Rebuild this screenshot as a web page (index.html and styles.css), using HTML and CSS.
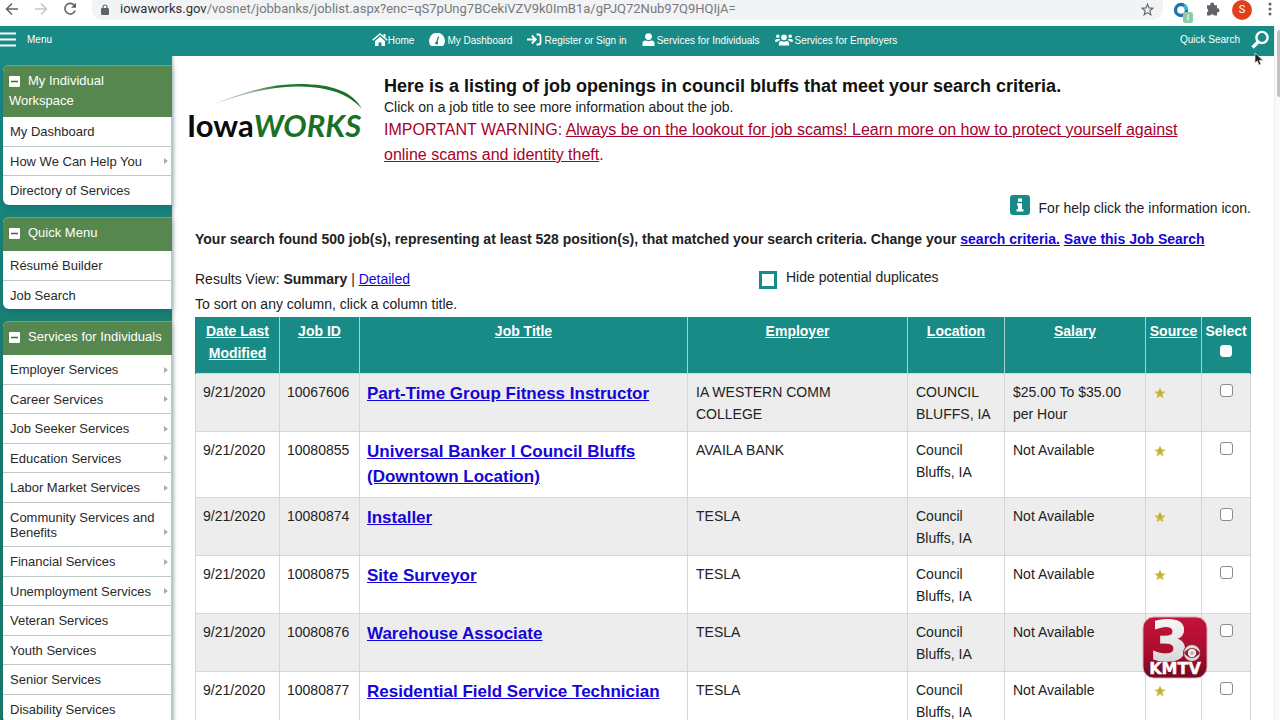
FILE: index.html
```html
<!DOCTYPE html>
<html lang="en">
<head>
<meta charset="utf-8">
<title>IowaWORKS - Job List</title>
<link rel="stylesheet" href="styles.css">
</head>
<body>
<svg class="defs" aria-hidden="true">
  <symbol id="star" viewBox="0 0 12 12"><path d="M6 .6 7.6 4.3l4 .4-3 2.6.9 4L6 9.200l-3.500 2.100.9-4-3-2.600 4-.4z" fill="#cdbd35"/><path d="M6 3v4.500" stroke="#8fa04a" stroke-width="1"/></symbol>
</svg>

<div class="chrome">
  <button class="chrome-btn" aria-label="Back"><svg width="14" height="14" viewBox="0 0 14 14" fill="none" stroke="#5f6368" stroke-width="1.500"><path d="M13 7H2M7 1.500 1.500 7 7 12.500"/></svg></button>
  <button class="chrome-btn" aria-label="Forward"><svg width="14" height="14" viewBox="0 0 14 14" fill="none" stroke="#c4c6c9" stroke-width="1.500"><path d="M1 7h11M7 1.500 12.500 7 7 12.500"/></svg></button>
  <button class="chrome-btn" aria-label="Reload"><svg width="14" height="14" viewBox="0 0 14 14" fill="none" stroke="#5f6368" stroke-width="1.600"><path d="M11.500 3.500A5.300 5.300 0 1 0 12.200 8.500"/><path d="M13 .8v5H8z" fill="#5f6368" stroke="none"/></svg></button>
  <div class="omnibox">
    <svg width="8" height="11" viewBox="0 0 8 11"><rect y="4" width="8" height="7" rx="1" fill="#5f6368"/><path d="M2 4.500V3a2 2 0 0 1 4 0v1.500" fill="none" stroke="#5f6368" stroke-width="1.200"/></svg>
    <span class="url"><b>iowaworks.gov</b>/vosnet/jobbanks/joblist.aspx?enc=qS7pUng7BCekiVZV9k0ImB1a/gPJQ72Nub97Q9HQIjA=</span>
    <svg width="13" height="13" viewBox="0 0 13 13" fill="none" stroke="#5f6368" stroke-width="1.100"><path d="M6.500 1.200 8 4.900l4 .3-3.100 2.600 1 3.900-3.400-2.100-3.400 2.100 1-3.900L1 5.200l4-.3z"/></svg>
  </div>
  <div class="extensions">
    <svg width="21" height="21" viewBox="0 0 21 21"><circle cx="8" cy="8" r="5.500" fill="none" stroke="#2173a6" stroke-width="3.400"/><path d="M11 3.500a5.500 5.500 0 0 1 2.500 4.500" fill="none" stroke="#3fb6d8" stroke-width="3.400"/><rect x="10" y="10" width="10" height="11" rx="2" fill="#8fcbaa"/><path d="M15 12.500v6" stroke="#e8f7ef" stroke-width="1.300"/></svg>
    <svg width="14" height="14" viewBox="0 0 14 14" fill="#5f6368"><path d="M1 3.200h3.300a2 2 0 1 1 3.800 0H11v3.200a2 2 0 1 1 0 3.900v3.200H8a2 2 0 0 0-3.700 0H1v-3.300a2 2 0 0 0 0-3.700z"/></svg>
    <span class="avatar">S</span>
    <svg width="4" height="14" viewBox="0 0 4 14" fill="#5f6368"><circle cx="2" cy="2" r="1.500"/><circle cx="2" cy="7" r="1.500"/><circle cx="2" cy="12" r="1.500"/></svg>
  </div>
</div>

<div class="viewport">
  <div class="page">
    <header class="topbar">
      <button class="menu-btn"><svg width="16" height="15" viewBox="0 0 16 15" stroke="#fff" stroke-width="2"><path d="M0 1.500h16M0 7.500h16M0 13.500h16"/></svg>Menu</button>
      <nav class="topnav">
        <a href="#" class="tight"><svg width="16" height="14" viewBox="0 0 16 14"><path d="M.7 7.200 8 1l7.300 6.200" fill="none" stroke="#fff" stroke-width="1.500"/><path d="M11.500 1h2v4l-2-1.700zM8 3.700l5 4.200V13H9.500V9.500h-3V13H3V7.900z" fill="#fff"/></svg>Home</a>
        <a href="#"><svg width="16" height="14" viewBox="0 0 16 14"><path d="M2 13a8 8 0 1 1 12 0z" fill="#fff"/><path d="m7.500 10 2-6.500" stroke="#198b86" stroke-width="1.300"/><circle cx="7.700" cy="10" r="1.600" fill="#198b86"/></svg>My Dashboard</a>
        <a href="#"><svg width="15" height="14" viewBox="0 0 15 14" fill="none" stroke="#fff" stroke-width="1.800"><path d="M0 6.500h8M4.800 2.500l4 4-4 4M9.500 1.500h2a2 2 0 0 1 2 2v6a2 2 0 0 1-2 2h-2"/></svg>Register or Sign in</a>
        <a href="#"><svg width="13" height="14" viewBox="0 0 13 14" fill="#fff"><circle cx="6.500" cy="3.600" r="3.400"/><path d="M.5 13v-2.200A3.300 3.300 0 0 1 4 7.500a5 5 0 0 0 5 0 3.300 3.300 0 0 1 3.500 3.300V13z"/></svg>Services for Individuals</a>
        <a href="#"><svg width="18" height="14" viewBox="0 0 18 14" fill="#fff"><circle cx="9" cy="4.300" r="2.900"/><circle cx="2.800" cy="3.300" r="1.800"/><circle cx="15.200" cy="3.300" r="1.800"/><path d="M3.800 12.500v-1.400C3.800 9 5.200 8 6.500 8a5 5 0 0 0 5 0c1.300 0 2.700 1 2.700 3.100v1.400zM0 8.500C0 6.700 1 6 2 6h2.500l.8 1.300C4 7.700 3.200 8 2.900 8.800H0zM18 8.500C18 6.700 17 6 16 6h-2.500l-.8 1.300c1.300.4 2.100.7 2.400 1.500H18z"/></svg>Services for Employers</a>
      </nav>
      <button class="quick-search">Quick Search<svg width="18" height="19" viewBox="0 0 18 19" fill="none" stroke="#fff"><circle cx="11" cy="7.500" r="5.600" stroke-width="2.400"/><path d="m7 12-5.500 5.500" stroke-width="3.200"/></svg></button>
    </header>

    <div class="columns">
      <aside class="sidebar">
        <section class="panel">
          <h2><svg class="minus" viewBox="0 0 11 11"><rect width="11" height="11" rx="1" fill="#fff"/><path d="M2 5.500h7" stroke="#3f6b33" stroke-width="1.600"/></svg>My Individual Workspace</h2>
          <ul>
            <li><a href="#">My Dashboard</a></li>
            <li class="more"><a href="#">How We Can Help You</a></li>
            <li><a href="#">Directory of Services</a></li>
          </ul>
        </section>
        <section class="panel">
          <h2><svg class="minus" viewBox="0 0 11 11"><rect width="11" height="11" rx="1" fill="#fff"/><path d="M2 5.500h7" stroke="#3f6b33" stroke-width="1.600"/></svg>Quick Menu</h2>
          <ul>
            <li><a href="#">Résumé Builder</a></li>
            <li><a href="#">Job Search</a></li>
          </ul>
        </section>
        <section class="panel">
          <h2><svg class="minus" viewBox="0 0 11 11"><rect width="11" height="11" rx="1" fill="#fff"/><path d="M2 5.500h7" stroke="#3f6b33" stroke-width="1.600"/></svg>Services for Individuals</h2>
          <ul>
            <li class="more"><a href="#">Employer Services</a></li>
            <li class="more"><a href="#">Career Services</a></li>
            <li class="more"><a href="#">Job Seeker Services</a></li>
            <li class="more"><a href="#">Education Services</a></li>
            <li class="more"><a href="#">Labor Market Services</a></li>
            <li class="more"><a href="#">Community Services and Benefits</a></li>
            <li class="more"><a href="#">Financial Services</a></li>
            <li class="more"><a href="#">Unemployment Services</a></li>
            <li><a href="#">Veteran Services</a></li>
            <li><a href="#">Youth Services</a></li>
            <li><a href="#">Senior Services</a></li>
            <li><a href="#">Disability Services</a></li>
          </ul>
        </section>
      </aside>

      <main class="content">
        <div class="intro">
          <div class="logo">
            <svg viewBox="0 0 177 30" aria-hidden="true"><defs><linearGradient id="swoosh"><stop offset="0" stop-color="#d5dcd6"/><stop offset=".3" stop-color="#8aa890"/><stop offset=".45" stop-color="#1f7a2c"/><stop offset="1" stop-color="#1c6b2a"/></linearGradient></defs><path d="M22 24C56 10 84 2 112 2c34 0 54 8 63 25C162 12 142 5 112 4.500 84 4 56 12 22 24z" fill="url(#swoosh)"/></svg>
            <div class="wordmark">Iowa<em>WORKS</em></div>
          </div>
          <div class="intro-text">
            <h1>Here is a listing of job openings in council bluffs that meet your search criteria.</h1>
            <p>Click on a job title to see more information about the job.</p>
            <p class="warning">IMPORTANT WARNING: <a href="#">Always be on the lookout for job scams! Learn more on how to protect yourself against online scams and identity theft</a>.</p>
          </div>
        </div>

        <p class="help"><svg width="20" height="20" viewBox="0 0 20 20"><rect width="20" height="20" rx="3" fill="#198b86"/><path d="M8 3.500h4v3.200H8zM7 8.300h5v6h1.500v2.200h-7v-2.200H8v-3.800H7z" fill="#fff"/></svg>For help click the information icon.</p>

        <p class="found">Your search found 500 job(s), representing at least 528 position(s), that matched your search criteria. Change your <a href="#">search criteria.</a> <a href="#">Save this Job Search</a></p>

        <div class="view-row">
          <div>Results View: <b>Summary</b> | <a href="#">Detailed</a></div>
          <label class="duplicates"><input type="checkbox">Hide potential duplicates</label>
        </div>
        <p class="sort-note">To sort on any column, click a column title.</p>

        <table class="jobs">
          <colgroup><col class="c-date"><col class="c-id"><col class="c-title"><col class="c-employer"><col class="c-location"><col class="c-salary"><col class="c-source"><col class="c-select"></colgroup>
          <thead>
            <tr>
              <th><a href="#">Date Last Modified</a></th><th><a href="#">Job ID</a></th><th><a href="#">Job Title</a></th><th><a href="#">Employer</a></th><th><a href="#">Location</a></th><th><a href="#">Salary</a></th><th class="snug"><a href="#">Source</a></th><th class="snug"><label>Select<input type="checkbox"></label></th>
            </tr>
          </thead>
          <tbody>
            <tr><td>9/21/2020</td><td>10067606</td><td class="title"><a href="#">Part-Time Group Fitness Instructor</a></td><td>IA WESTERN COMM<br>COLLEGE</td><td>COUNCIL BLUFFS, IA</td><td>$25.00 To $35.00 per Hour</td><td><svg class="star"><use href="#star"/></svg></td><td class="pick"><input type="checkbox" aria-label="Select job 10067606"></td></tr>
            <tr><td>9/21/2020</td><td>10080855</td><td class="title"><a href="#">Universal Banker I Council Bluffs (Downtown Location)</a></td><td>AVAILA BANK</td><td>Council Bluffs, IA</td><td>Not Available</td><td><svg class="star"><use href="#star"/></svg></td><td class="pick"><input type="checkbox" aria-label="Select job 10080855"></td></tr>
            <tr><td>9/21/2020</td><td>10080874</td><td class="title"><a href="#">Installer</a></td><td>TESLA</td><td>Council Bluffs, IA</td><td>Not Available</td><td><svg class="star"><use href="#star"/></svg></td><td class="pick"><input type="checkbox" aria-label="Select job 10080874"></td></tr>
            <tr><td>9/21/2020</td><td>10080875</td><td class="title"><a href="#">Site Surveyor</a></td><td>TESLA</td><td>Council Bluffs, IA</td><td>Not Available</td><td><svg class="star"><use href="#star"/></svg></td><td class="pick"><input type="checkbox" aria-label="Select job 10080875"></td></tr>
            <tr><td>9/21/2020</td><td>10080876</td><td class="title"><a href="#">Warehouse Associate</a></td><td>TESLA</td><td>Council Bluffs, IA</td><td>Not Available</td><td><svg class="star"><use href="#star"/></svg></td><td class="pick"><input type="checkbox" aria-label="Select job 10080876"></td></tr>
            <tr><td>9/21/2020</td><td>10080877</td><td class="title"><a href="#">Residential Field Service Technician</a></td><td>TESLA</td><td>Council Bluffs, IA</td><td>Not Available</td><td><svg class="star"><use href="#star"/></svg></td><td class="pick"><input type="checkbox" aria-label="Select job 10080877"></td></tr>
          </tbody>
        </table>
      </main>
    </div>
  </div>
  <div class="scrollbar"><div class="thumb"></div></div>
</div>

<svg class="cursor" width="10" height="14" viewBox="0 0 10 14" aria-hidden="true"><path d="M1 1v10l2.300-2 1.700 4 2-.9-1.700-3.800H9z" fill="#222" stroke="#ddd" stroke-width=".8"/></svg>

<svg class="station" width="66" height="64" viewBox="0 0 66 64" role="img" aria-label="3 KMTV">
  <defs><linearGradient id="red" x2="0" y2="1"><stop offset="0" stop-color="#c4143a"/><stop offset=".6" stop-color="#a80c2c"/><stop offset="1" stop-color="#6d0a20"/></linearGradient><linearGradient id="silver" x2="0" y2="1"><stop offset="0" stop-color="#fff"/><stop offset="1" stop-color="#cfcfcf"/></linearGradient></defs>
  <rect x="1" y="1" width="64" height="61" rx="11" fill="url(#red)" stroke="#d9a9b3"/>
  <text class="station-num" x="8" y="44" fill="url(#silver)" stroke="url(#silver)" stroke-width="1">3</text>
  <circle cx="50" cy="37" r="8.500" fill="#dcdcdc" stroke="#8e1a30" stroke-width="1"/>
  <path d="M42 37q8-10 16 0-8 10-16 0z" fill="#8e1a30"/><circle cx="50" cy="37" r="4.200" fill="#eee"/><circle cx="50" cy="37" r="2" fill="#c9b0b5"/>
  <text class="station-name" x="33" y="58" text-anchor="middle" fill="#fff" stroke="#fff" stroke-width=".4">KMTV</text>
</svg>
</body>
</html>
```
FILE: styles.css
```css
* { box-sizing: border-box; }
body {
  margin: 0;
  height: 100vh;
  display: flex;
  flex-direction: column;
  overflow: hidden;
  position: relative;
  background: #fff;
  color: #222;
  font: 14px/20px "Liberation Sans", Arial, sans-serif;
}
h1, h2, p, ul { margin: 0; padding: 0; }
button { border: 0; padding: 0; background: none; font: inherit; color: inherit; }
svg { flex: none; }
.defs { position: absolute; width: 0; height: 0; }

/* Browser toolbar */
.chrome { flex: none; height: 26px; display: flex; align-items: flex-start; padding: 0 8px 0 5px; }
.chrome-btn { width: 29px; height: 18px; display: flex; align-items: center; }
.omnibox {
  flex: 1;
  height: 20px;
  display: flex;
  align-items: center;
  gap: 11px;
  padding: 0 9px 2px;
  border-radius: 0 0 10px 10px;
  background: #f1f3f4;
  color: #77797c;
}
.url { flex: 1; font: 13px/18px Roboto, sans-serif; }
.url b { font-weight: 400; color: #303134; }
.extensions { display: flex; align-items: flex-start; gap: 12px; margin-left: 10px; }
.extensions svg { margin-top: 2px; }
.avatar {
  width: 20px; height: 20px;
  border-radius: 50%;
  background: #e0401f;
  color: #fff;
  font: 11px/19px Roboto, sans-serif;
  text-align: center;
}
.extensions svg:last-child { margin-left: 4px; }

.viewport { flex: 1; min-height: 0; display: flex; overflow: hidden; }
.page { flex: 1; min-width: 0; display: flex; flex-direction: column; }
.scrollbar { width: 6px; padding-top: 4px; background: #fafafa; border-left: 1px solid #eee; }
.thumb { height: 67px; margin-left: 2px; border-radius: 4px 0 0 4px; background: #c1c1c1; }

/* Top bar */
.topbar {
  flex: none;
  height: 30px;
  display: grid;
  grid-template-columns: 1fr auto 1fr;
  align-items: center;
  padding-right: 5px;
  background: #198b86;
  color: #fff;
  font-size: 10px;
  line-height: 14px;
}
.topbar svg { display: block; }
.menu-btn { justify-self: start; display: flex; align-items: center; gap: 11px; margin-bottom: 3px; }
.topnav { display: flex; gap: 15px; }
.topnav a { display: flex; align-items: center; gap: 2px; color: #fff; text-decoration: none; }
.topnav a.tight { gap: 0; }
.topnav svg { margin-bottom: 3px; }
.quick-search { justify-self: end; display: flex; align-items: center; gap: 11px; margin-bottom: 3px; }

.columns { flex: 1; display: flex; min-height: 0; }

/* Sidebar */
.sidebar {
  flex: none;
  width: 172px;
  padding: 9px 0 0 3px;
  display: flex;
  flex-direction: column;
  gap: 12px;
  background: linear-gradient(#198b86, #1c7c6a 60%);
  font-size: 13px;
  line-height: 15px;
}
.panel {
  flex: none;
  border-radius: 6px 0 0 6px;
  overflow: hidden;
  background: #fff;
  box-shadow: 0 3px 6px rgba(0, 90, 120, .4);
}
.panel h2 {
  min-height: 34px;
  padding: 5px 6px 6px;
  border-top: 1px solid #7aa565;
  background: #55874f;
  color: #fff;
  font-size: 13px;
  font-weight: 400;
  line-height: 20px;
}
.minus { width: 11px; height: 11px; margin-right: 8px; vertical-align: -2px; }
.panel ul { list-style: none; }
.panel li {
  position: relative;
  padding: 7px 14px 7px 7px;
  border-bottom: 1px solid #bccac4;
  border-right: 1px solid #bccac4;
}
.panel li:nth-child(even) { padding-bottom: 6px; }
.panel li:last-child { border-bottom: 0; }
.panel a { color: #2a2a2a; text-decoration: none; }
.more::after {
  content: "";
  position: absolute;
  right: 3px;
  bottom: 11px;
  border: 3px solid transparent;
  border-left: 4px solid #a9adb0;
  border-right: 0;
}

/* Content */
.content { flex: 1; min-width: 0; padding: 19px 23px 0; box-shadow: inset 4px 0 4px -4px #999; overflow: hidden; }
.intro { display: flex; gap: 20px; margin-left: -8px; }
.logo { flex: none; width: 177px; padding-top: 7px; }
.logo svg { display: block; width: 100%; }
.wordmark { font: 700 31px/26px Lato, sans-serif; color: #0b0b0b; }
.wordmark em { color: #197127; }
.intro-text { flex: 1; padding-right: 56px; }
.intro h1 { font-size: 18px; line-height: 22px; color: #111; }
.intro .warning { font-size: 16px; line-height: 25px; }
.help { display: flex; justify-content: flex-end; align-items: flex-end; gap: 9px; margin-top: 28px; height: 24px; padding-bottom: 1px; }
.help svg { margin-bottom: 3px; }
.found { margin-top: 10px; font-weight: 700; }
.content a { color: #1505d8; }
.content .warning, .content .warning a { color: #a8002d; }
.view-row { display: flex; justify-content: space-between; margin-top: 20px; }
.duplicates { display: flex; gap: 9px; flex-basis: 492px; line-height: 16px; }
.duplicates input { appearance: none; width: 18px; height: 18px; margin: 2px 0 0; border: 3px solid #198b86; background: #fff; }
.sort-note { margin: 5px 0 3px; }

/* Job table */
.jobs { width: 100%; table-layout: fixed; border-collapse: collapse; line-height: 22px; }
.c-date { width: 84px; }
.c-id { width: 80px; }
.c-employer { width: 220px; }
.c-location { width: 97px; }
.c-salary { width: 141px; }
.c-source { width: 56px; }
.c-select { width: 49px; }
.jobs th { padding: 3px 8px 9px; border: 1px solid #a5d2cf; border-width: 0 1px; background: #198b86; vertical-align: top; color: #fff; }
.jobs th:first-child { border-left-color: #198b86; }
.jobs th:last-child { border-right-color: #198b86; }
.jobs th a { color: #fff; }
.jobs th.snug { padding-left: 0; padding-right: 0; }
.jobs td { padding: 7px 8px 6px; border: 1px solid #d6d6d6; vertical-align: top; }
.jobs td:first-child, .jobs td:nth-child(2) { padding-left: 7px; }
.jobs tbody tr:nth-child(odd) { background: #ededed; }
.jobs td.title { padding: 7px 7px 8px; font-size: 17px; font-weight: 700; line-height: 25px; }
.jobs input { appearance: none; display: block; width: 13px; height: 13px; margin: 3px auto 0; border: 1px solid #8a8a8a; border-radius: 3px; background: #fff; }
.jobs th input { width: 12px; height: 12px; border-color: #fff; }
.star { display: block; width: 12px; height: 12px; margin-top: 6px; }

/* Overlays */
.cursor { position: absolute; top: 52px; right: 16px; }
.station { position: absolute; right: 72px; bottom: 40px; overflow: visible; }
.station-num { font: 700 56px "DejaVu Sans", sans-serif; }
.station-name { font: 700 16px "DejaVu Sans", sans-serif; }
```
